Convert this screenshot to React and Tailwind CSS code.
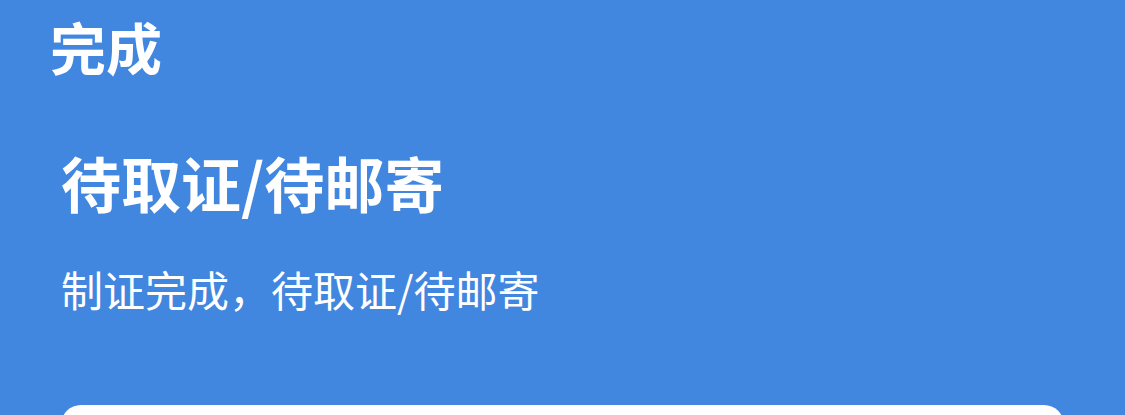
export default function App() {
  return (
    <div
      className="w-full h-[415px] overflow-hidden bg-[#4186df] text-white"
      style={{ fontFamily: '"Noto Sans CJK SC", "Noto Sans", sans-serif' }}
    >
      {/* Header */}
      <div className="pt-[18px] pl-[50px]">
        <h1 className="text-[56px] font-bold leading-none">完成</h1>
      </div>

      {/* Status */}
      <div className="pl-[61px] mt-[78px]">
        <h2 className="text-[60px] font-bold leading-none">待取证/待邮寄</h2>
        <p className="mt-[56px] text-[42px] leading-none">制证完成，待取证/待邮寄</p>
      </div>

      {/* Card */}
      <div className="mx-[61px] mt-[95px] h-[300px] bg-white rounded-[20px]"></div>
    </div>
  );
}
